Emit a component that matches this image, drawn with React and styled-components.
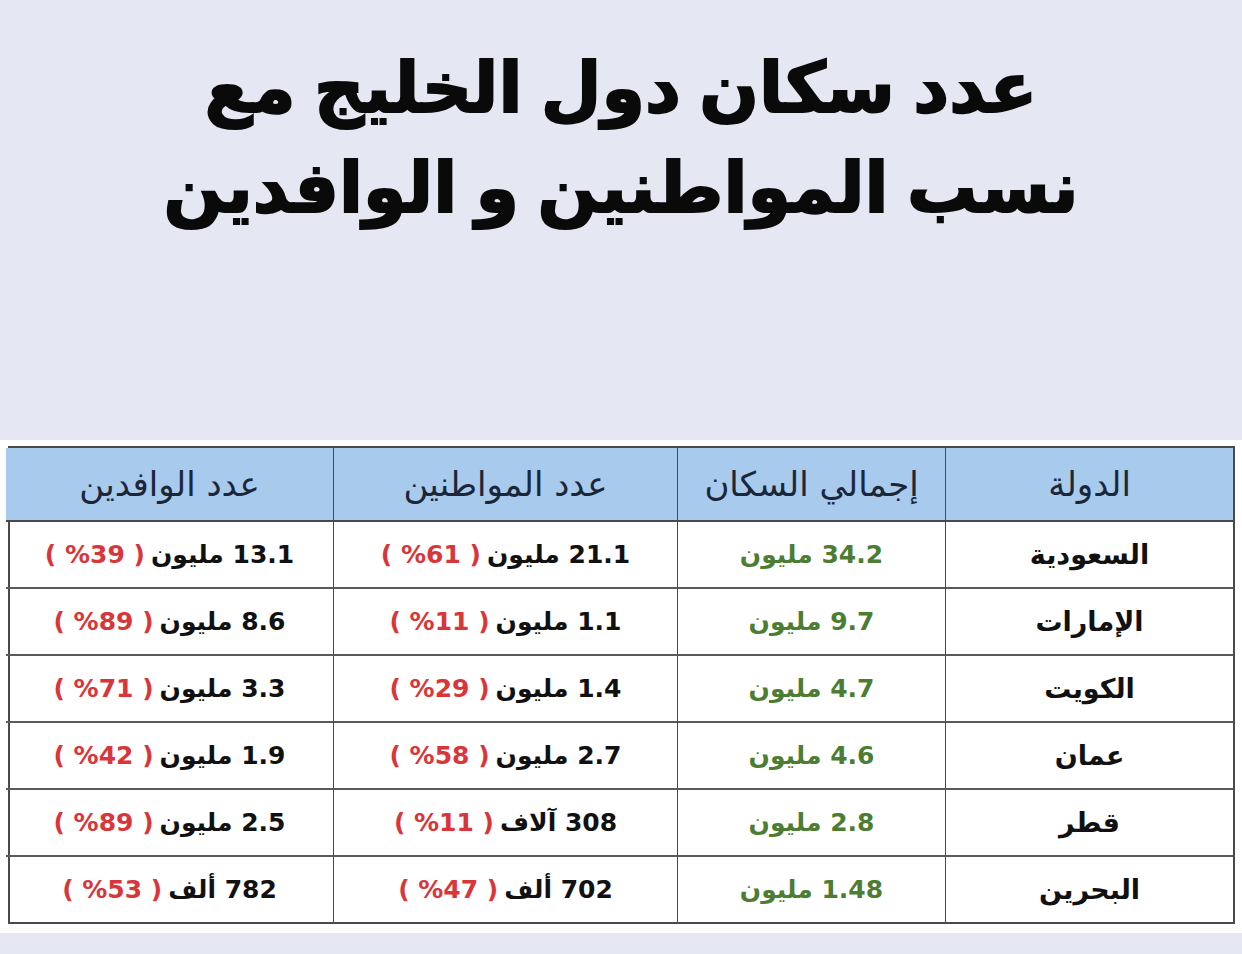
import React from 'react';
import styled, { createGlobalStyle } from "styled-components";

const GlobalStyle = createGlobalStyle`
  html, body {
    margin: 0;
    padding: 0;
    background: #e5e8f2;
  }
  body {
    font-family: "DejaVu Sans", "Noto Sans", sans-serif;
  }
`

const Page = styled.div`
  width: 1242px;
  height: 954px;
  display: flex;
  flex-direction: column;
  background: #e5e8f2;
  overflow: hidden;
`

const Title = styled.h1`
  margin: 0;
  padding-top: 38px;
  height: 440px;
  box-sizing: border-box;
  text-align: center;
  font-size: 70px;
  line-height: 100px;
  font-weight: 700;
  word-spacing: -6px;
  color: #0a0a0a;
  -webkit-text-stroke: 2px #0a0a0a;
`

const Sheet = styled.div`
  background: #ffffff;
  padding: 6px 7px 9px 8px;
`

const Table = styled.div`
  display: grid;
  grid-template-columns: 288px 268px 344px 327px;
  border: 2px solid #4a4a4a;
  direction: rtl;
`

const HeadCell = styled.div`
  height: 72px;
  display: flex;
  align-items: center;
  justify-content: center;
  background: #a8caec;
  color: #1b2638;
  font-size: 34px;
  border-bottom: 2px solid #4a4a4a;
  border-left: ${p => (p.$last ? "none" : "1.5px solid #4a4a4a")};
`

const Cell = styled.div`
  height: 65px;
  display: flex;
  align-items: center;
  justify-content: center;
  gap: 6px;
  font-size: ${p => (p.$name ? "27px" : "25px")};
  font-weight: 700;
  color: ${p => (p.$green ? "#4c7d33" : "#111")};
  border-bottom: ${p => (p.$bottom ? "none" : "2px solid #5a5a5a")};
  border-left: ${p => (p.$last ? "none" : "1.5px solid #4a4a4a")};
`

const Pct = styled.span`
  direction: ltr;
  unicode-bidi: isolate;
  color: #d8363a;
`

const heads = ["الدولة", "إجمالي السكان", "عدد المواطنين", "عدد الوافدين"];

const rows = [
  ["السعودية", "34.2 مليون", ["21.1 مليون", "61"], ["13.1 مليون", "39"]],
  ["الإمارات", "9.7 مليون", ["1.1 مليون", "11"], ["8.6 مليون", "89"]],
  ["الكويت", "4.7 مليون", ["1.4 مليون", "29"], ["3.3 مليون", "71"]],
  ["عمان", "4.6 مليون", ["2.7 مليون", "58"], ["1.9 مليون", "42"]],
  ["قطر", "2.8 مليون", ["308 آلاف", "11"], ["2.5 مليون", "89"]],
  ["البحرين", "1.48 مليون", ["702 ألف", "47"], ["782 ألف", "53"]],
];

const Split = ({ value, last, bottom }) => (
  <Cell $last={last} $bottom={bottom}>
    <span>{value[0]}</span>
    <Pct>( %{value[1]} )</Pct>
  </Cell>
)

const App = () => {
  return (
    <Page>
      <GlobalStyle />
      <Title dir="rtl">
        عدد سكان دول الخليج مع
        <br />
        نسب المواطنين و الوافدين
      </Title>
      <Sheet>
        <Table>
          {heads.map((h, i) => (
            <HeadCell key={h} $last={i === 3}>{h}</HeadCell>
          ))}
          {rows.map((r, i) => {
            const bottom = i === rows.length - 1;
            return (
              <React.Fragment key={r[0]}>
                <Cell $name $bottom={bottom}>{r[0]}</Cell>
                <Cell $green $bottom={bottom}>{r[1]}</Cell>
                <Split value={r[2]} bottom={bottom} />
                <Split value={r[3]} bottom={bottom} last />
              </React.Fragment>
            )
          })}
        </Table>
      </Sheet>
    </Page>
  )
}

export default App
